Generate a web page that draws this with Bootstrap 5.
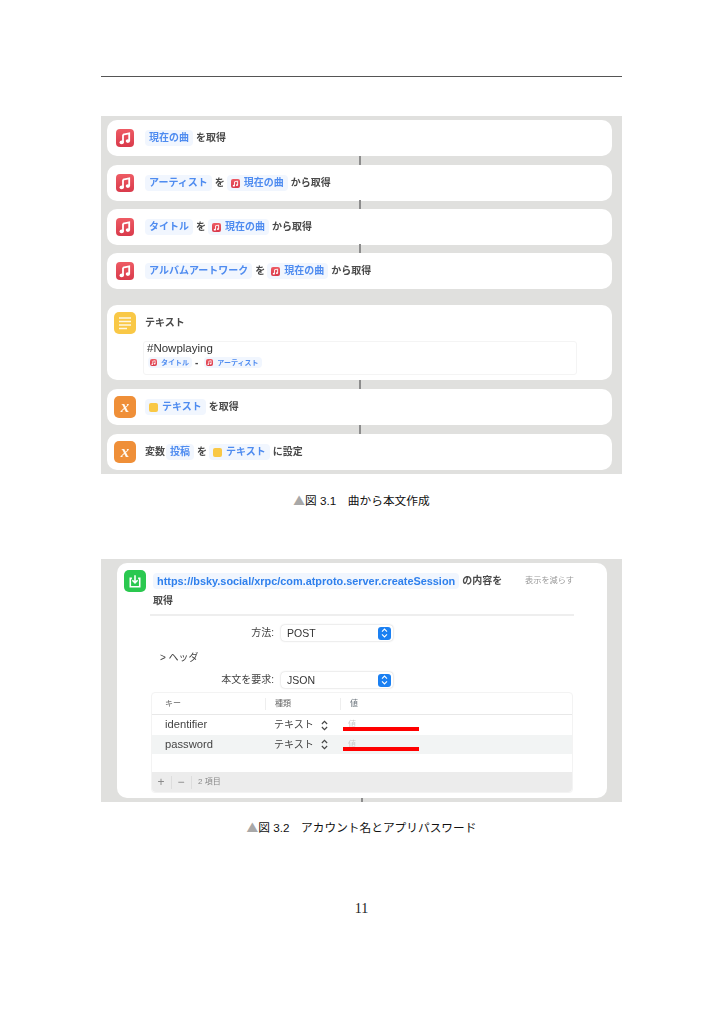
<!DOCTYPE html>
<html lang="ja">
<head>
  <title>曲から本文作成</title>
  <meta charset="utf-8">
  <link href="https://cdn.jsdelivr.net/npm/bootstrap@5.3.0/dist/css/bootstrap.min.css" rel="stylesheet">
  <style>
    body {
      background: #fff;
      color: #333;
      font-family: "Liberation Sans", "Noto Sans CJK JP", sans-serif;
      font-size: 10px;
      line-height: 1;
    }
    .page-sheet { width: 521px; margin-left: 101px; padding-top: 76px; height: 1024px; }
    .top-rule { border-top: 1px solid #555; height: 0; }

    /* gray shortcut panels */
    .shot-panel { background: #e0e0de; margin-top: 39px; padding: 4px 10px 4px 6px; filter: blur(.35px); }
    .shot-panel-two { margin-top: 0; height: 243px; padding: 4px 15px 4px 16px; position: relative; }
    .step-card { background: #fff; border-radius: 10px; height: 36px; padding-left: 9px; position: relative; font-weight: 700; color: #4a4a4a; margin-top: 8px; }
    .step-card:first-child { margin-top: 0; }
    .step-gap9 { margin-top: 9px; }
    .step-gap16 { margin-top: 16px; }
    .step-linked::before { content: ""; position: absolute; left: 252px; top: -9px; width: 2px; height: 9px; background: #8d8d8d; }
    .step-tall { height: 75px; padding: 7px 0 0 7px; }
    .step-wide { padding-left: 7px; }

    .app-icon { width: 18px; height: 18px; border-radius: 4px; flex: none; margin-right: 11px; }
    .app-icon-lg { width: 22px; height: 22px; border-radius: 5px; margin-right: 9px; }
    .ic-red { background: linear-gradient(#ee5b64, #d93a4b); }
    .ic-yellow { background: #f9c846; }
    .ic-orange { background: #ef8f38; color: #fff8ee; font: italic 700 17px "Liberation Serif", serif; }
    .ic-green { background: #2ac84f; margin-right: 7px; }
    .mini-icon { width: 9px; height: 9px; border-radius: 2px; flex: none; margin-right: 4px; }
    .mini-small { width: 7px; height: 7px; margin-right: 4px; }

    .var-pill { background: #f1f6fe; color: #4f8cf0; border-radius: 4px; height: 16px; padding: 0 4px; margin-right: 3px; white-space: nowrap; }
    .var-pill-small { height: 11px; padding: 0 3px 0 2px; font-size: 7px; margin-right: 3px; }
    .pill-gap-l { margin-left: 2px; }
    .plain-word { white-space: nowrap; }
    .word-tight { margin-right: 1px; }

    .text-box { border: 1px solid #f4f4f4; border-radius: 3px; height: 34px; width: 434px; margin: 7px 0 0 29px; padding: 0 3px; }
    .text-box-head { font-size: 11.5px; line-height: 13px; font-weight: 400; color: #333; }
    .text-box-line { margin-top: 2px; margin-left: 1px; }

    .caption-line { text-align: center; font-size: 11.7px; font-weight: 400; color: #111; margin-top: 19px; line-height: 13px; margin-bottom: 52px; }
    .caption-second { margin-top: 18px; }
    .caption-tri { color: #a8a8a8; font-family: "Noto Sans CJK JP", sans-serif; }

    /* request card */
    .req-card { background: #fff; border-radius: 10px; height: 235px; padding: 7px 33px 0 7px; position: relative; }
    .req-card::after { content: ""; position: absolute; left: 244px; bottom: -4px; width: 2px; height: 4px; background: #8d8d8d; }
    .req-body { font-weight: 700; color: #4a4a4a; }
    .url-pill { background: #f1f6fe; color: #2f80ed; font-weight: 700; font-size: 10.9px; height: 16px; padding: 0 4px; border-radius: 4px; margin-right: 3px; white-space: nowrap; }
    .less-link { color: #9a9a9a; font-size: 8.2px; margin-left: auto; font-weight: 400; }
    .req-second { margin-left: 29px; height: 17px; }
    .req-rule { border-top: 2px solid #eee; margin: 5px 0 0 26px; }
    .form-line { height: 16px; }
    .form-label-cell { width: 150px; text-align: right; color: #444; font-size: 10px; margin-right: 7px; font-weight: 400; }
    .fake-select { width: 112px; height: 16px; border-radius: 4px; box-shadow: 0 0 2px rgba(0,0,0,.25); padding: 0 2px 0 6px; font-size: 10.5px; color: #333; font-weight: 400; }
    .select-btn { width: 13px; height: 13px; border-radius: 3px; background: #1b80f2; margin-left: auto; }
    .line-one { margin-top: 9px; }
    .line-heads { margin: 10px 0 0 36px; height: 14px; color: #444; font-weight: 400; }
    .line-three { margin-top: 7px; }

    .kv-table { margin: 4px 1px 0 27px; border-radius: 4px; border: 1px solid #f3f3f3; height: 101px; font-weight: 400; color: #444; }
    .kv-row { height: 20px; font-size: 11.2px; }
    .kv-alt { background: #f2f4f4; height: 19px; }
    .kv-spacer { height: 18px; }
    .kv-key { width: 113px; padding-left: 13px; }
    .kv-kind { width: 74px; padding-left: 9px; font-size: 10px; }
    .kv-value { padding-left: 9px; position: relative; color: #ccc; font-size: 8px; flex: 1; }
    .kv-head { height: 22px; border-bottom: 1px solid #e8e8e8; color: #666; }
    .kv-head span { font-size: 8px; }
    .kv-sep { border-left: 1px solid #eee; height: 12px; }
    .red-mark { position: absolute; left: 4px; top: 6px; width: 76px; height: 4px; background: #f00; }
    .kv-foot { background: #ececec; height: 20px; color: #8a8a8a; font-size: 8px; border-radius: 0 0 4px 4px; padding-left: 4px; }
    .foot-sign { font-size: 12px; width: 10px; text-align: center; }
    .foot-sep { border-left: 1px solid #ddd; height: 13px; margin: 0 4px 0 5px; }
    .foot-count { margin-left: 2px; }
    .updown { width: 7px; height: 11px; margin-left: 7px; }

    .page-number { text-align: center; font: 14px/16px "Liberation Serif", serif; color: #222; margin-top: 67px; }
  </style>
</head>
<body>
<svg width="0" height="0" class="d-block position-absolute">
  <symbol id="note" viewBox="0 0 18 18">
    <path d="M7 5.600 13.200 4.300V12" fill="none" stroke="#fff" stroke-width="1.800"/>
    <path d="M7 5.600V13.400" fill="none" stroke="#fff" stroke-width="1.800"/>
    <ellipse cx="5.700" cy="13.400" rx="2.200" ry="1.800" fill="#fff"/>
    <ellipse cx="11.900" cy="12.100" rx="2.200" ry="1.800" fill="#fff"/>
  </symbol>
  <symbol id="lines" viewBox="0 0 22 22">
    <path d="M5 6H17M5 9.500H17M5 13H17M5 16.500H13" stroke="#fff" stroke-width="1.300" opacity=".85"/>
  </symbol>
  <symbol id="fetch" viewBox="0 0 21 21">
    <path d="M7.500 8H6V16H15V8H13.500" fill="none" stroke="#fff" stroke-width="1.500"/>
    <path d="M10.500 5V12M8 9.800 10.500 12.300 13 9.800" fill="none" stroke="#fff" stroke-width="1.500"/>
  </symbol>
  <symbol id="updown" viewBox="0 0 8 12">
    <path d="M1 4.300 4 1.300 7 4.300M1 7.700 4 10.700 7 7.700" fill="none" stroke="currentColor" stroke-width="1.300"/>
  </symbol>
</svg>

<div class="page-sheet">
  <div class="top-rule"></div>

  <!-- Figure 3.1 -->
  <div class="shot-panel">
    <div class="step-card d-flex align-items-center">
      <svg class="app-icon ic-red"><use href="#note"/></svg>
      <span class="var-pill d-flex align-items-center">現在の曲</span>
      <span class="plain-word">を取得</span>
    </div>
    <div class="step-card step-gap9 step-linked d-flex align-items-center">
      <svg class="app-icon ic-red"><use href="#note"/></svg>
      <span class="var-pill d-flex align-items-center">アーティスト</span>
      <span class="plain-word">を</span>
      <span class="var-pill pill-gap-l d-flex align-items-center"><svg class="mini-icon ic-red"><use href="#note"/></svg>現在の曲</span>
      <span class="plain-word">から取得</span>
    </div>
    <div class="step-card step-linked d-flex align-items-center">
      <svg class="app-icon ic-red"><use href="#note"/></svg>
      <span class="var-pill d-flex align-items-center">タイトル</span>
      <span class="plain-word">を</span>
      <span class="var-pill pill-gap-l d-flex align-items-center"><svg class="mini-icon ic-red"><use href="#note"/></svg>現在の曲</span>
      <span class="plain-word">から取得</span>
    </div>
    <div class="step-card step-linked d-flex align-items-center">
      <svg class="app-icon ic-red"><use href="#note"/></svg>
      <span class="var-pill d-flex align-items-center">アルバムアートワーク</span>
      <span class="plain-word">を</span>
      <span class="var-pill pill-gap-l d-flex align-items-center"><svg class="mini-icon ic-red"><use href="#note"/></svg>現在の曲</span>
      <span class="plain-word">から取得</span>
    </div>

    <div class="step-card step-tall step-gap16">
      <div class="d-flex align-items-center">
        <svg class="app-icon app-icon-lg ic-yellow"><use href="#lines"/></svg>
        <span class="plain-word">テキスト</span>
      </div>
      <div class="text-box">
        <div class="text-box-head">#Nowplaying</div>
        <div class="text-box-line d-flex align-items-center">
          <span class="var-pill var-pill-small d-flex align-items-center"><svg class="mini-icon mini-small ic-red"><use href="#note"/></svg>タイトル</span>
          <span class="plain-word me-1">-</span>
          <span class="var-pill var-pill-small pill-gap-l d-flex align-items-center"><svg class="mini-icon mini-small ic-red"><use href="#note"/></svg>アーティスト</span>
        </div>
      </div>
    </div>
    <div class="step-card step-wide step-gap9 step-linked d-flex align-items-center">
      <span class="app-icon app-icon-lg ic-orange d-flex align-items-center justify-content-center">x</span>
      <span class="var-pill d-flex align-items-center"><svg class="mini-icon ic-yellow"></svg>テキスト</span>
      <span class="plain-word">を取得</span>
    </div>
    <div class="step-card step-wide step-gap9 step-linked d-flex align-items-center">
      <span class="app-icon app-icon-lg ic-orange d-flex align-items-center justify-content-center">x</span>
      <span class="plain-word word-tight">変数</span>
      <span class="var-pill d-flex align-items-center">投稿</span>
      <span class="plain-word">を</span>
      <span class="var-pill pill-gap-l d-flex align-items-center"><svg class="mini-icon ic-yellow"></svg>テキスト</span>
      <span class="plain-word">に設定</span>
    </div>
  </div>
  <div class="caption-line"><span class="caption-tri">▲</span>図 3.1　曲から本文作成</div>

  <!-- Figure 3.2 -->
  <div class="shot-panel shot-panel-two">
    <div class="req-card req-body">
      <div class="d-flex align-items-center">
        <svg class="app-icon app-icon-lg ic-green"><use href="#fetch"/></svg>
        <span class="url-pill d-flex align-items-center">https://bsky.social/xrpc/com.atproto.server.createSession</span>
        <span class="plain-word">の内容を</span>
        <span class="less-link">表示を減らす</span>
      </div>
      <div class="req-second d-flex align-items-center">取得</div>
      <div class="req-rule"></div>

      <div class="form-line line-one d-flex align-items-center">
        <span class="form-label-cell">方法:</span>
        <div class="fake-select d-flex align-items-center">POST
          <span class="select-btn d-flex align-items-center justify-content-center text-white"><svg width="7" height="10"><use href="#updown"/></svg></span>
        </div>
      </div>
      <div class="line-heads d-flex align-items-center">&gt; ヘッダ</div>
      <div class="form-line line-three d-flex align-items-center">
        <span class="form-label-cell">本文を要求:</span>
        <div class="fake-select d-flex align-items-center">JSON
          <span class="select-btn d-flex align-items-center justify-content-center text-white"><svg width="7" height="10"><use href="#updown"/></svg></span>
        </div>
      </div>

      <div class="kv-table">
        <div class="kv-row kv-head d-flex align-items-center">
          <span class="kv-key">キー</span><span class="kv-sep"></span>
          <span class="kv-kind">種類</span><span class="kv-sep"></span>
          <span class="kv-value text-secondary">値</span>
        </div>
        <div class="kv-row d-flex align-items-center">
          <span class="kv-key">identifier</span>
          <span class="kv-kind d-flex align-items-center">テキスト<svg class="updown"><use href="#updown"/></svg></span>
          <span class="kv-value">値<span class="red-mark"></span></span>
        </div>
        <div class="kv-row kv-alt d-flex align-items-center">
          <span class="kv-key">password</span>
          <span class="kv-kind d-flex align-items-center">テキスト<svg class="updown"><use href="#updown"/></svg></span>
          <span class="kv-value">値<span class="red-mark"></span></span>
        </div>
        <div class="kv-spacer"></div>
        <div class="kv-foot d-flex align-items-center">
          <span class="foot-sign">+</span><span class="foot-sep"></span>
          <span class="foot-sign">−</span><span class="foot-sep"></span>
          <span class="foot-count">2 項目</span>
        </div>
      </div>
    </div>
  </div>
  <div class="caption-line caption-second"><span class="caption-tri">▲</span>図 3.2　アカウント名とアプリパスワード</div>

  <div class="page-number">11</div>
</div>

<script src="https://cdn.jsdelivr.net/npm/bootstrap@5.3.0/dist/js/bootstrap.bundle.min.js"></script>
</body>
</html>
